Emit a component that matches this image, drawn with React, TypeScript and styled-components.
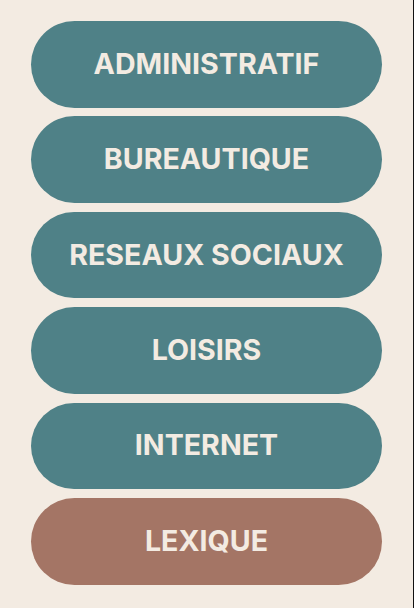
import React from 'react';
import styled, { createGlobalStyle } from 'styled-components';

type Tone = 'teal' | 'clay';

interface MenuEntry {
    readonly label: string;
    readonly tone: Tone;
}

const entries: ReadonlyArray<MenuEntry> = [
    { label: 'ADMINISTRATIF', tone: 'teal' },
    { label: 'BUREAUTIQUE', tone: 'teal' },
    { label: 'RESEAUX SOCIAUX', tone: 'teal' },
    { label: 'LOISIRS', tone: 'teal' },
    { label: 'INTERNET', tone: 'teal' },
    { label: 'LEXIQUE', tone: 'clay' },
];

const toneColor: Record<Tone, string> = {
    teal: '#4f8187',
    clay: '#a47565',
};

const App = () => (
    <>
        <GlobalStyle/>
        <Page>
            <Menu>
                {entries.map(entry => (
                    <MenuButton key={entry.label} $tone={entry.tone}>{entry.label}</MenuButton>
                ))}
            </Menu>
        </Page>
    </>
);

const GlobalStyle = createGlobalStyle`
    html, body {
        margin: 0;
        padding: 0;
        background: #f3ebe2;
    }
    body {
        font-family: Inter, "Noto Sans", sans-serif;
    }
`;

const Page = styled.div`
    height: 608px;
    box-sizing: border-box;
    border-right: 1px solid #111;
    background: #f3ebe2;
`;

const Menu = styled.nav`
    display: flex;
    flex-direction: column;
    align-items: center;
    gap: 8.7px;
    padding-top: 21px;
`;

const MenuButton = styled.button<{ $tone: Tone }>`
    width: 351.5px;
    height: 86.7px;
    border: none;
    border-radius: 44px;
    background: ${({ $tone }) => toneColor[$tone]};
    color: #f3ebe2;
    font-family: Inter, "Noto Sans", sans-serif;
    font-weight: 700;
    font-size: 28.6px;
    letter-spacing: 0;
    display: flex;
    align-items: center;
    justify-content: center;
    padding: 0 0 2px 0;
    cursor: pointer;
`;

export default App;
